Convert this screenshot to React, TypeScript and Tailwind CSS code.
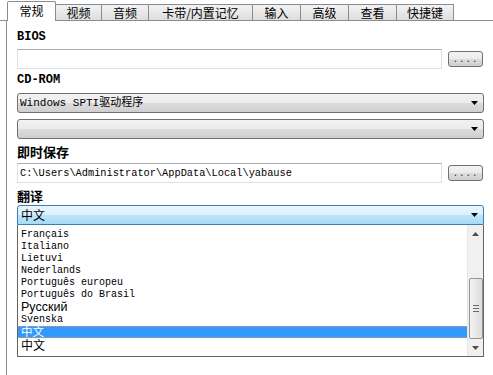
import React from "react";

const cjk = "font-['Noto_Sans_CJK_SC',sans-serif]";
const mono = "font-['Liberation_Mono','Noto_Sans_CJK_SC',monospace]";

function Arrow({ color = "#000" }: { color?: string }) {
  return (
    <svg width="7" height="4" viewBox="0 0 7 4">
      <polygon points="0,0 7,0 3.5,4" fill={color} />
    </svg>
  );
}

function DotsButton() {
  return (
    <div className="w-[35px] h-[16px] mt-[2px] shrink-0 rounded-[3px] border border-[#707070] bg-[linear-gradient(to_bottom,#f2f2f2_0%,#ebebeb_50%,#dddddd_50%,#cfcfcf_100%)] flex items-center justify-center">
      <span className={`${mono} text-[9px] leading-none tracking-[1px] text-[#222] mt-[2px]`}>....</span>
    </div>
  );
}

function Select({ text, mt }: { text: string; mt: string }) {
  return (
    <div
      className={`${mt} h-[20px] rounded-[3px] border border-[#707070] bg-[linear-gradient(to_bottom,#f2f2f2_0%,#ebebeb_50%,#dddddd_50%,#cfcfcf_100%)] flex items-center pl-[2px] pr-[5px]`}
    >
      <span className={`${mono} text-[11px] leading-none text-black flex-1`}>{text}</span>
      <Arrow />
    </div>
  );
}

const tabs: { label: string; w: string }[] = [
  { label: "视频", w: "w-[46px]" },
  { label: "音频", w: "w-[47px]" },
  { label: "卡带/内置记忆", w: "w-[104px]" },
  { label: "输入", w: "w-[48px]" },
  { label: "高级", w: "w-[48px]" },
  { label: "查看", w: "w-[48px]" },
  { label: "快捷键", w: "w-[57px]" },
];

export default function App() {
  return (
    <div className="w-[493px] h-[375px] overflow-hidden bg-white flex flex-col">
      {/* Tabs */}
      <div className="h-[21px] flex items-end shrink-0">
        <div className="w-[7px] h-full border-b border-[#898c95]" />
        <div className={`w-[49px] h-[20px] border border-b-0 border-[#898c95] bg-white rounded-t-[2px] flex justify-center pt-[1px] ${cjk} text-[12px] leading-[16px] text-black`}>
          常规
        </div>
        {tabs.map((t) => (
          <div
            key={t.label}
            className={`${t.w} h-[17px] border-t border-r border-b border-[#898c95] bg-[linear-gradient(to_bottom,#f3f3f3,#dedede)] flex justify-center items-center ${cjk} text-[12px] leading-none text-black`}
          >
            {t.label}
          </div>
        ))}
        <div className="flex-1 h-full border-b border-[#898c95]" />
      </div>

      {/* Panel */}
      <div className="flex-1 ml-[6px] border-l border-[#898c95] pl-[10px] pr-[9px] pt-[8px] flex flex-col">
        <div className={`h-[16px] ${mono} font-bold text-[12px] leading-[16px] text-black`}>BIOS</div>
        <div className="mt-[4px] flex gap-[6px] pr-[1px]">
          <div className="flex-1 h-[20px] border border-[#dbdfe6] border-t-[#abadb3] bg-white" />
          <DotsButton />
        </div>

        <div className={`mt-[3px] h-[16px] ${mono} font-bold text-[12px] leading-[16px] text-black`}>CD-ROM</div>
        <Select mt="mt-[5px]" text="Windows SPTI驱动程序" />
        <Select mt="mt-[6px]" text="" />

        <div className={`mt-[5px] h-[16px] ${cjk} font-bold text-[13px] leading-[16px] text-black`}>即时保存</div>
        <div className="mt-[3px] flex gap-[6px] pr-[1px]">
          <div className="flex-1 h-[20px] border border-[#dbdfe6] border-t-[#abadb3] bg-white flex items-center pl-[2px]">
            <span className={`${mono} text-[10.3px] leading-none text-black`}>
              C:\Users\Administrator\AppData\Local\yabause
            </span>
          </div>
          <DotsButton />
        </div>

        <div className={`mt-[5px] h-[16px] ${cjk} font-bold text-[13px] leading-[16px] text-black`}>翻译</div>
        {/* open combobox */}
        <div className="mt-[1px] h-[20px] rounded-t-[3px] border border-[#3c7fb1] bg-[linear-gradient(to_bottom,#eaf6fd_0%,#d9f0fc_50%,#bee6fd_50%,#a7d9f5_100%)] flex items-center pl-[3px] pr-[5px]">
          <span className={`${cjk} text-[12px] leading-none text-black flex-1`}>中文</span>
          <Arrow />
        </div>
        {/* dropdown list */}
        <div className="h-[132px] border-x border-b border-[#646464] bg-white flex">
          <div className="flex-1 flex flex-col pt-[4px]">
            {[
              "Français",
              "Italiano",
              "Lietuvi",
              "Nederlands",
              "Português europeu",
              "Português do Brasil",
            ].map((s) => (
              <div key={s} className={`h-[12px] pl-[3px] flex items-center ${mono} text-[10px] leading-[12px] text-black whitespace-pre`}>
                {s}
              </div>
            ))}
            <div className="h-[13px] pl-[3px] flex items-center font-['Liberation_Sans',sans-serif] text-[12.5px] leading-[13px] text-black">
              Русский
            </div>
            <div className={`h-[12px] pl-[3px] flex items-center ${mono} text-[10px] leading-[12px] text-black`}>Svenska</div>
            <div className={`h-[12px] pl-[3px] flex items-center bg-[#3399ff] border-y border-dotted border-[#d9a060] ${cjk} text-[11.5px] leading-none text-white`}>
              中文
            </div>
            <div className={`h-[14px] pl-[3px] flex items-center ${cjk} text-[12px] leading-none text-black`}>中文</div>
          </div>
          {/* scrollbar */}
          <div className="w-[16px] bg-[#f0f0f0] border-l border-[#e6e6e6] flex flex-col items-center">
            <div className="h-[17px] flex items-center justify-center">
              <svg width="7" height="4" viewBox="0 0 7 4">
                <polygon points="0,4 7,4 3.5,0" fill="#4d4d4d" />
              </svg>
            </div>
            <div className="h-[36px]" />
            <div className="w-[14px] h-[61px] rounded-[2px] border border-[#959595] bg-[linear-gradient(to_right,#f4f4f4,#dcdcdc)] flex flex-col items-center justify-center gap-[2px]">
              <div className="w-[6px] h-[1px] bg-[#6a6a6a]" />
              <div className="w-[6px] h-[1px] bg-[#6a6a6a]" />
              <div className="w-[6px] h-[1px] bg-[#6a6a6a]" />
            </div>
            <div className="flex-1 flex items-center justify-center">
              <Arrow color="#4d4d4d" />
            </div>
          </div>
        </div>
      </div>
    </div>
  );
}
